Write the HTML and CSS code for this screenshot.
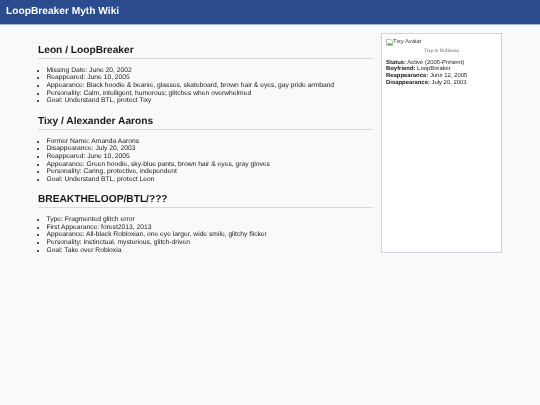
FILE: index.html
```html
<!DOCTYPE html>
<html lang="en">
<head>
    <meta charset="UTF-8">
    <meta name="viewport" content="width=device-width, initial-scale=1.0">
    <title>LoopBreaker Myth Wiki</title>
    <link rel="stylesheet" href="styles.css">
</head>
<body>

<header class="topbar">LoopBreaker Myth Wiki</header>

<div class="contenedor">
    <main class="articulo">
        <h2>Leon / LoopBreaker</h2>
        <ul>
            <li>Missing Date: June 20, 2002</li>
            <li>Reappeared: June 10, 2005</li>
            <li>Appearance: Black hoodie &amp; beanie, glasses, skateboard, brown hair &amp; eyes, gay pride armband</li>
            <li>Personality: Calm, intelligent, humorous; glitches when overwhelmed</li>
            <li>Goal: Understand BTL, protect Tixy</li>
        </ul>

        <h2>Tixy / Alexander Aarons</h2>
        <ul>
            <li>Former Name: Amanda Aarons</li>
            <li>Disappearance: July 20, 2003</li>
            <li>Reappeared: June 10, 2005</li>
            <li>Appearance: Green hoodie, sky-blue pants, brown hair &amp; eyes, gray gloves</li>
            <li>Personality: Caring, protective, independent</li>
            <li>Goal: Understand BTL, protect Leon</li>
        </ul>

        <h2>BREAKTHELOOP/BTL/???</h2>
        <ul>
            <li>Type: Fragmented glitch error</li>
            <li>First Appearance: forest2013, 2013</li>
            <li>Appearance: All-black Robloxian, one eye larger, wide smile, glitchy flicker</li>
            <li>Personality: Instinctual, mysterious, glitch-driven</li>
            <li>Goal: Take over Robloxia</li>
        </ul>
    </main>

    <aside class="ficha">
        <div class="avatar">
            <svg class="roto" width="7" height="7" viewBox="0 0 7 7">
                <path d="M0.5 0.5H5L6.5 2V6.5H0.5Z" fill="#fff" stroke="#a0a0a0" stroke-width="0.7"/>
                <path d="M1 6L3 3.5L4.5 5L6 4V6Z" fill="#6aa84f"/>
            </svg>
            <span>Tixy Avatar</span>
        </div>
        <p class="pie">Tixy in Robloxia</p>
        <p class="dato"><strong>Status:</strong> Active (2005-Present)</p>
        <p class="dato"><strong>Boyfriend:</strong> LoopBreaker</p>
        <p class="dato"><strong>Reappearance:</strong> June 12, 2005</p>
        <p class="dato"><strong>Disappearance:</strong> July 20, 2003</p>
    </aside>
</div>

</body>
</html>
```

FILE: styles.css
```css
html, body {
    height: 100%;
}
body {
    font-family: "Liberation Sans", Arial, sans-serif;
    margin: 0;
    padding: 0;
    background-color: #f8f9fb;
    color: #181818;
    overflow: hidden;
    text-rendering: geometricPrecision;
}
/* la captura original viene reescalada, por eso el blur */
.topbar, .contenedor {
    filter: blur(0.25px);
}
.topbar {
    height: 24px;
    padding-left: 6px;
    background-color: #2a4b8d;
    border-bottom: 1px solid #a3b4d2;
    color: white;
    font-size: 10.2px;
    font-weight: bold;
    line-height: 24px;
}
.contenedor {
    display: flex;
    align-items: flex-start;
    gap: 8px;
    padding: 8px 38px 0 38px;
}
.articulo {
    width: 335px;
    flex-shrink: 0;
    padding-top: 12px;
}
h2 {
    margin: 0;
    padding-bottom: 0.8px;
    border-bottom: 1px solid #d6d8de;
    font-size: 10.2px;
    line-height: 12px;
    color: #181818;
}
ul {
    margin: 8px 0 10.7px;
    padding-left: 8.5px;
    font-size: 6.72px;
    line-height: 7.65px;
}
.ficha {
    width: 119px;
    height: 218px;
    flex-shrink: 0;
    background-color: white;
    border: 1px solid #d0d3d8;
    font-size: 5.9px;
    line-height: 6.7px;
}
.avatar {
    display: flex;
    align-items: center;
    margin: 4.5px 0 0 4px;
    height: 7px;
    color: #444;
}
.pie {
    margin: 3px 0 5px;
    text-align: center;
    font-size: 4.9px;
    line-height: 6px;
    color: #666;
}
.dato {
    margin: 0 0 0 4px;
    white-space: nowrap;
}
```
